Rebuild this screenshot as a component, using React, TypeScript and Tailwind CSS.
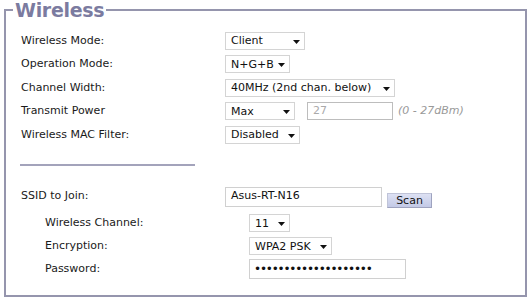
import React from 'react';

const font = { fontFamily: '"DejaVu Sans", Verdana, sans-serif' };

interface DropProps {
  value: string;
  width: string;
}

// fake select box, old-router style
const Drop: React.FC<DropProps> = ({ value, width }) => (
  <div className={`${width} h-[18px] flex items-center justify-between border border-[#d4d4d4] bg-white pl-[5px] pr-[4px]`}>
    <span className="text-[11px] leading-none text-[#111]">{value}</span>
    <svg width="7" height="4" viewBox="0 0 7 4" className="mt-[2px]">
      <path d="M0 0h7L3.5 4z" fill="#111" />
    </svg>
  </div>
);

const Row: React.FC<{ label: string; sub?: boolean; h?: string; children: React.ReactNode }> = ({ label, sub, h, children }) => (
  <div className={`flex items-center ${h ?? 'h-[23.5px]'} ${sub ? 'pl-[24px]' : ''}`}>
    <div className="w-[204px] shrink-0 text-[11px] text-[#1a1a1a]">{label}</div>
    <div className="flex items-center">{children}</div>
  </div>
);

export default function App() {
  return (
    <div className="bg-white w-[531px] h-[303px] pl-[4px]" style={font}>
      <fieldset className="w-[523px] border-2 border-[#9595ad]">
        <legend className="ml-[7px] px-[2px] text-[19px] leading-[20px] font-bold tracking-[-0.3px] text-[#7b7ba0]">
          Wireless
        </legend>
        <div className="pl-[15px] pt-[9px] pb-[14px]">
          <Row label="Wireless Mode:">
            <Drop value="Client" width="w-[80px]" />
          </Row>
          <Row label="Operation Mode:">
            <Drop value="N+G+B" width="w-[65px]" />
          </Row>
          <Row label="Channel Width:">
            <Drop value="40MHz (2nd chan. below)" width="w-[170px]" />
          </Row>
          <Row label="Transmit Power">
            <Drop value="Max" width="w-[70px]" />
            <div className="ml-[12px] w-[86px] h-[18px] flex items-center border border-[#bdbdbd] pl-[5px] text-[11px] text-[#aaaaaa]">
              27
            </div>
            <span className="ml-[5px] text-[11px] italic text-[#999999]">(0 - 27dBm)</span>
          </Row>
          <Row label="Wireless MAC Filter:">
            <Drop value="Disabled" width="w-[75px]" />
          </Row>

          <div className="mt-[17px] ml-[-1px] w-[175px] h-[2px] bg-[#a3a3bb]" />

          <div className="mt-[19px]">
            <Row label="SSID to Join:" h="h-[24px]">
              <div className="w-[157px] h-[20px] flex items-center border border-[#d0d0d0] pl-[5px] text-[11px] text-[#111]">
                Asus-RT-N16
              </div>
              <button className="ml-[5px] mt-[7px] w-[45px] h-[15px] flex items-center justify-center border border-[#c0c4d8] border-b-[#9ea3bf] border-r-[#9ea3bf] bg-gradient-to-b from-[#dde1f3] to-[#c3c9e6] text-[11px] leading-none text-[#111]">
                Scan
              </button>
            </Row>
          </div>
          <div className="mt-[3px]">
            <Row label="Wireless Channel:" sub h="h-[23px]">
              <Drop value="11" width="w-[41px]" />
            </Row>
            <Row label="Encryption:" sub h="h-[23px]">
              <Drop value="WPA2 PSK" width="w-[83px]" />
            </Row>
            <Row label="Password:" sub h="h-[23px]">
              <div className="w-[157px] h-[20px] flex items-center border border-[#d0d0d0] pl-[4px] text-[12px] tracking-[-1.2px] text-[#111]">
                ••••••••••••••••••••
              </div>
            </Row>
          </div>
        </div>
      </fieldset>
    </div>
  );
}
